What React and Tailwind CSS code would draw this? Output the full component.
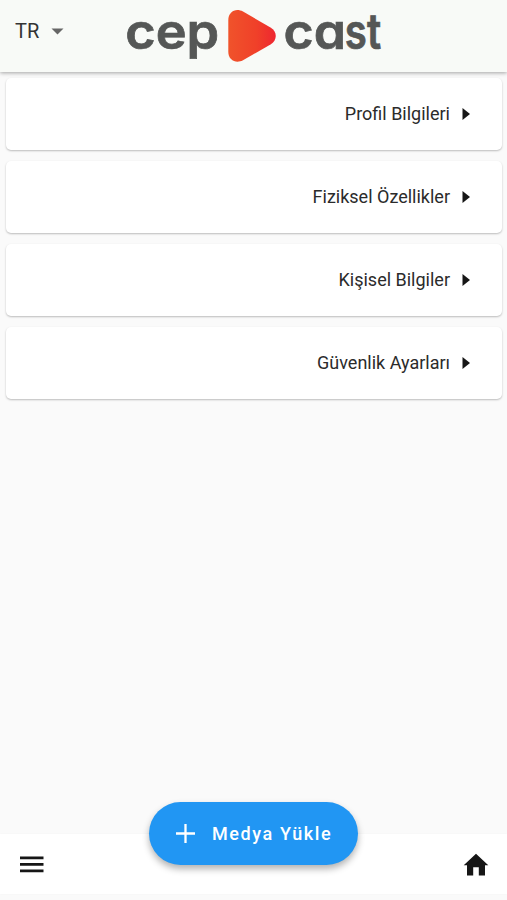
import { useState } from "react";

const menuItems = [
    "Profil Bilgileri",
    "Fiziksel Özellikler",
    "Kişisel Bilgiler",
    "Güvenlik Ayarları",
];

function Logo() {
    return (
        <svg width="268" height="72" viewBox="120 0 268 72" role="img" aria-label="cepcast">
            <defs>
                <linearGradient id="play" x1="0" x2="1" y1="0" y2="0">
                    <stop offset="0" stopColor="#f0532b" />
                    <stop offset="0.6" stopColor="#f04029" />
                    <stop offset="1" stopColor="#ee2630" />
                </linearGradient>
            </defs>
            <g className="fill-[#555756] stroke-[#555756] font-['Inter',sans-serif] text-[49px] font-semibold [font-feature-settings:'cv11']" strokeWidth="0.700">
                <text x="125.200" y="49.300" textLength="94" lengthAdjust="spacingAndGlyphs">cep</text>
                {/* "st" is set tighter than "ca" */}
                <text y="49.300">
                    <tspan x="283.500" textLength="62.500" lengthAdjust="spacingAndGlyphs">ca</tspan>
                    <tspan x="344.800" textLength="36.300" lengthAdjust="spacingAndGlyphs">st</tspan>
                </text>
            </g>
            <path
                d="M228.300 20C228.300 11.500 236 7.500 243 11.500L270.500 27.500C277.500 31.800 277.500 40 270.500 44.500L243 60.200C236 64 228.300 60 228.300 52Z"
                fill="url(#play)"
            />
        </svg>
    );
}

function Header({ lang }) {
    return (
        <header className="relative flex h-[72px] shrink-0 items-start bg-[#f8faf7] shadow-[0_1px_4px_rgba(0,0,0,0.35)]">
            <button className="flex w-[120px] items-center pl-[15px] pt-[17px] text-[20px] leading-7 text-[#333]">
                {lang}
                <svg className="ml-3" width="13" height="7" viewBox="0 0 13 7">
                    <path d="M0.500 0.500H12.500L6.500 6.500Z" fill="#666" />
                </svg>
            </button>
            <Logo />
        </header>
    );
}

function MenuCard({ title }) {
    return (
        <button className="flex h-[72px] w-full items-center justify-end rounded-[5px] bg-white pr-[32px] text-[18px] text-[#2b2b2b] shadow-[0_1px_2px_rgba(0,0,0,0.25)]">
            <span className="pb-0.5">{title}</span>
            <svg className="ml-3" width="8" height="12" viewBox="0 0 8 12">
                <path d="M0.500 0L8 6L0.500 12Z" fill="#161616" />
            </svg>
        </button>
    );
}

export default function App() {
    const [lang] = useState("TR");

    return (
        <div className="flex h-[900px] w-full flex-col overflow-hidden bg-[#fafafa] font-['Roboto',sans-serif]">
            <Header lang={lang} />
            <main className="flex flex-1 flex-col gap-[11px] pl-[6px] pr-[5px] pt-[6px]">
                {menuItems.map((item) => (
                    <MenuCard key={item} title={item} />
                ))}
            </main>
            <nav className="relative mb-[6px] flex h-[60px] shrink-0 items-center justify-between bg-white pl-5 pr-[18px] shadow-[0_0_2px_rgba(0,0,0,0.03)]">
                <button aria-label="Menu">
                    <svg width="24" height="17" viewBox="0 0 24 17">
                        <path d="M0 0.500H23.500V3.200H0ZM0 7H23.500V9.700H0ZM0 13.500H23.500V16.200H0Z" fill="#161616" />
                    </svg>
                </button>
                <button aria-label="Home">
                    <svg width="26" height="23" viewBox="0 0 26 23">
                        <path d="M10.200 22.500V14.300H15.800V22.500H22V12.200H25.300L13 0.800L0.700 12.200H4V22.500Z" fill="#161616" />
                    </svg>
                </button>
                {/* upload button sits over the top edge of the bar */}
                <button className="absolute left-[149px] top-[-32px] flex h-[63px] w-[209px] items-center rounded-full bg-[#2196f3] pl-[27px] text-[18px] font-medium tracking-[1.600px] text-white shadow-[0_4px_7px_rgba(0,0,0,0.3)]">
                    <svg className="mr-[17px]" width="19" height="19" viewBox="0 0 19 19">
                        <path d="M9.500 0V19M0 9.500H19" stroke="#fff" strokeWidth="2.300" />
                    </svg>
                    Medya Yükle
                </button>
            </nav>
        </div>
    );
}
